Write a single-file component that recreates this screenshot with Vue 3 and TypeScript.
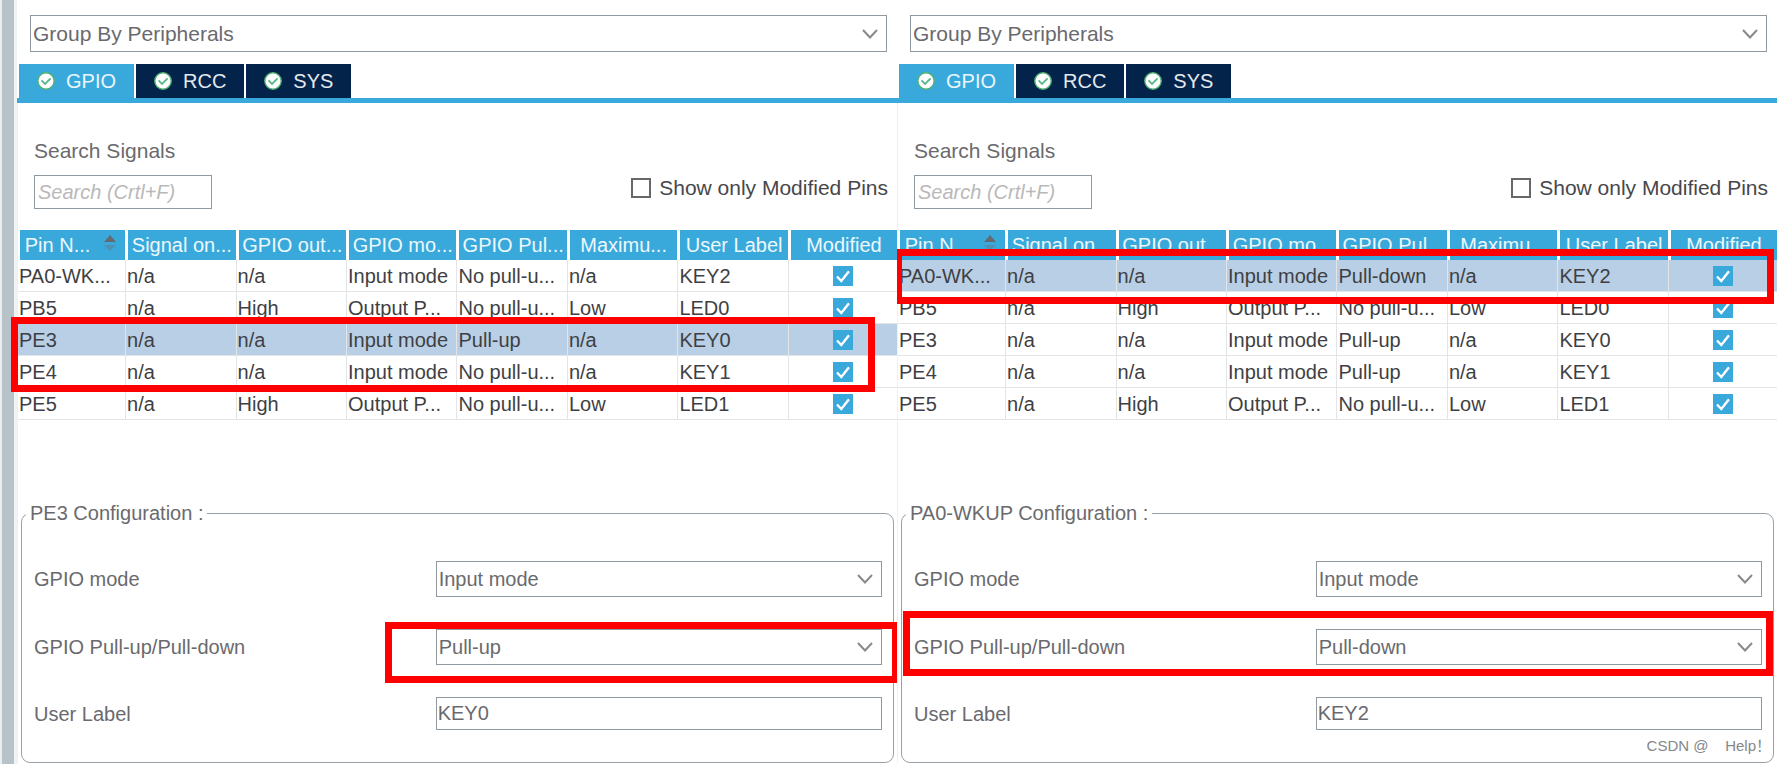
<script setup lang="ts">
import { reactive, ref } from 'vue'

interface PinRow {
  name: string
  signal: string
  output: string
  mode: string
  pull: string
  speed: string
  label: string
  modified: boolean
}

interface Panel {
  id: string
  selected: string
  title: string
  mode: string
  pull: string
  userLabel: string
  search: string
  onlyModified: boolean
  rows: PinRow[]
}

const tabs = ['GPIO', 'RCC', 'SYS']
const activeTab = ref('GPIO')

const headers = ['Pin N...', 'Signal on...', 'GPIO out...', 'GPIO mo...', 'GPIO Pul...', 'Maximu...', 'User Label', 'Modified']

function pin(name: string, output: string, mode: string, pull: string, speed: string, label: string): PinRow {
  return { name, signal: 'n/a', output, mode, pull, speed, label, modified: true }
}

const panels = reactive<Panel[]>([
  {
    id: 'left',
    selected: 'PE3',
    title: 'PE3 Configuration :',
    mode: 'Input mode',
    pull: 'Pull-up',
    userLabel: 'KEY0',
    search: '',
    onlyModified: false,
    rows: [
      pin('PA0-WK...', 'n/a', 'Input mode', 'No pull-u...', 'n/a', 'KEY2'),
      pin('PB5', 'High', 'Output P...', 'No pull-u...', 'Low', 'LED0'),
      pin('PE3', 'n/a', 'Input mode', 'Pull-up', 'n/a', 'KEY0'),
      pin('PE4', 'n/a', 'Input mode', 'No pull-u...', 'n/a', 'KEY1'),
      pin('PE5', 'High', 'Output P...', 'No pull-u...', 'Low', 'LED1'),
    ],
  },
  {
    id: 'right',
    selected: 'PA0-WK...',
    title: 'PA0-WKUP Configuration :',
    mode: 'Input mode',
    pull: 'Pull-down',
    userLabel: 'KEY2',
    search: '',
    onlyModified: false,
    rows: [
      pin('PA0-WK...', 'n/a', 'Input mode', 'Pull-down', 'n/a', 'KEY2'),
      pin('PB5', 'High', 'Output P...', 'No pull-u...', 'Low', 'LED0'),
      pin('PE3', 'n/a', 'Input mode', 'Pull-up', 'n/a', 'KEY0'),
      pin('PE4', 'n/a', 'Input mode', 'Pull-up', 'n/a', 'KEY1'),
      pin('PE5', 'High', 'Output P...', 'No pull-u...', 'Low', 'LED1'),
    ],
  },
])
</script>

<template>
  <main class="page">
    <div class="rail"></div>
    <section v-for="p in panels" :key="p.id" class="panel" :class="p.id">
      <div class="combo group-by">
        <select aria-label="Grouping">
          <option>Group By Peripherals</option>
        </select>
        <svg class="chevron" viewBox="0 0 16 10"><path d="M1 1 8 8.5 15 1" /></svg>
      </div>

      <div class="tabs" role="tablist">
        <button
          v-for="t in tabs"
          :key="t"
          type="button"
          role="tab"
          class="tab"
          :class="{ active: t === activeTab }"
          :aria-selected="t === activeTab"
          @click="activeTab = t"
        >
          <svg class="ok" viewBox="0 0 18 18">
            <circle cx="9" cy="9" r="8.2" />
            <path d="M4.6 8.4 8 12 13.6 6.4" />
          </svg>
          {{ t }}
        </button>
      </div>

      <div class="body">
        <div class="filters">
          <div class="search">
            <label :for="p.id + '-search'">Search Signals</label>
            <input :id="p.id + '-search'" v-model="p.search" type="text" placeholder="Search (Crtl+F)" />
          </div>
          <label class="only">
            <input v-model="p.onlyModified" type="checkbox" />
            Show only Modified Pins
          </label>
        </div>

        <table>
          <thead>
            <tr>
              <th v-for="(h, i) in headers" :key="h" scope="col">
                <span class="head">
                  {{ h }}
                  <svg v-if="i === 0" class="sort" viewBox="0 0 12 17">
                    <path class="up" d="M6 0 12 7H0Z" />
                    <path class="down" d="M0 10H12L6 16Z" />
                  </svg>
                </span>
              </th>
            </tr>
          </thead>
          <tbody>
            <tr v-for="r in p.rows" :key="r.name" :class="{ selected: r.name === p.selected }">
              <td>{{ r.name }}</td>
              <td>{{ r.signal }}</td>
              <td>{{ r.output }}</td>
              <td>{{ r.mode }}</td>
              <td>{{ r.pull }}</td>
              <td>{{ r.speed }}</td>
              <td>{{ r.label }}</td>
              <td>
                <span class="tick">
                  <input v-model="r.modified" type="checkbox" :aria-label="r.label + ' modified'" />
                  <svg v-if="r.modified" viewBox="0 0 20 20"><path d="M4 10.5 8.3 15 16 5.2" /></svg>
                </span>
              </td>
            </tr>
          </tbody>
        </table>

        <fieldset>
          <legend>{{ p.title }}</legend>
          <div class="fields">
            <label :for="p.id + '-mode'">GPIO mode</label>
            <div class="combo">
              <select :id="p.id + '-mode'" v-model="p.mode">
                <option>Input mode</option>
              </select>
              <svg class="chevron" viewBox="0 0 16 10"><path d="M1 1 8 8.5 15 1" /></svg>
            </div>
            <label :for="p.id + '-pull'">GPIO Pull-up/Pull-down</label>
            <div class="combo">
              <select :id="p.id + '-pull'" v-model="p.pull">
                <option>Pull-up</option>
                <option>Pull-down</option>
              </select>
              <svg class="chevron" viewBox="0 0 16 10"><path d="M1 1 8 8.5 15 1" /></svg>
            </div>
            <label :for="p.id + '-label'">User Label</label>
            <input :id="p.id + '-label'" v-model="p.userLabel" class="text" type="text" />
          </div>
        </fieldset>
      </div>

      <div class="mark mark-rows"></div>
      <div class="mark mark-pull"></div>
    </section>
    <div class="credit">CSDN @&nbsp;&nbsp;&nbsp; Help！</div>
  </main>
</template>

<style>
body {
  margin: 0;
  background: #fff;
}
</style>

<style scoped>
* {
  box-sizing: border-box;
}

.page {
  position: relative;
  display: flex;
  min-height: 100vh;
  overflow: hidden;
  background: #fff;
  color: #6a6a6e;
  font: 20px/24px "Liberation Sans", Arial, "Noto Sans CJK SC", sans-serif;
}

.rail {
  flex: none;
  width: 17px;
  background: #b7c3c9;
  border-left: 2px solid #e9eef0;
  border-right: 3px solid #f0f3f4;
}

.panel {
  position: relative;
  flex: 1 1 0;
  min-width: 0;
  padding-top: 15px;
}

input,
select,
button {
  margin: 0;
  font: inherit;
  color: inherit;
  border-radius: 0;
}

.combo {
  display: grid;
  align-items: center;
}

.combo > * {
  grid-area: 1 / 1;
}

.combo select {
  appearance: none;
  width: 100%;
  height: 36px;
  padding: 0 32px 0 2px;
  border: 1px solid #8f999f;
  background: #fff;
}

.chevron {
  justify-self: end;
  width: 16px;
  height: 10px;
  margin-right: 9px;
  fill: none;
  stroke: #87898c;
  stroke-width: 2;
  pointer-events: none;
}

.group-by {
  margin: 0 10px 12px 13px;
  font-size: 21px;
}

.group-by select {
  height: 37px;
}

.tabs {
  display: flex;
  gap: 2px;
  padding-left: 2px;
  border-bottom: 5px solid #39a9dc;
}

.tab {
  display: flex;
  align-items: center;
  gap: 11px;
  height: 34px;
  padding: 0 18px;
  border: 0;
  background: #03234b;
  color: #e4e9ef;
}

.tab.active {
  background: #39a9dc;
  color: #e9f7fd;
}

.ok {
  width: 18px;
  height: 18px;
}

.ok circle {
  fill: #fff;
  stroke: #52b173;
  stroke-width: 1.4;
}

.ok path {
  fill: none;
  stroke: #55b88a;
  stroke-width: 1.8;
}

.body {
  border-left: 1px solid #eef0f1;
}

.filters {
  display: flex;
  justify-content: space-between;
  align-items: flex-end;
  padding: 36px 9px 21px 16px;
  font-size: 21px;
}

.search {
  display: grid;
  gap: 12px;
}

.search input {
  width: 178px;
  height: 34px;
  padding: 0 3px;
  border: 1px solid #8f999f;
  font-size: 20px;
  font-style: italic;
}

.search input::placeholder {
  color: #b9b9b9;
  opacity: 1;
}

.only {
  display: flex;
  align-items: center;
  gap: 8px;
  padding-bottom: 9px;
  color: #47474b;
}

.only input {
  appearance: none;
  width: 20px;
  height: 20px;
  border: 2px solid #66686a;
  background: #fff;
}

table {
  width: 100%;
  table-layout: fixed;
  border-spacing: 0;
  color: #3f3f43;
}

th {
  height: 30px;
  padding: 0;
  border: solid #fff;
  border-width: 0 1px 0 2px;
  background: #39a9dc;
  color: #edf8fd;
  font-weight: 400;
  white-space: nowrap;
}

th:first-child,
th:last-child {
  width: 12.3%;
}

th:last-child {
  border-right: 0;
}

.head {
  display: flex;
  justify-content: center;
  align-items: center;
}

.sort {
  width: 12px;
  height: 17px;
  margin: 0 4px 4px 14px;
}

.up {
  fill: #646a70;
}

.down {
  fill: #4d92b3;
}

td {
  height: 32px;
  padding: 0 0 0 1px;
  border: solid #e1e5e8;
  border-width: 0 1px 1px 0;
  white-space: nowrap;
}

td:last-child {
  border-right: 0;
}

.selected td {
  background: #b8cfe5;
}

.tick {
  display: grid;
  width: 20px;
  height: 20px;
  margin: 0 auto;
}

.tick > * {
  grid-area: 1 / 1;
}

.tick input {
  appearance: none;
  width: 20px;
  height: 20px;
  border: 1px solid #39a9dc;
}

.tick input:checked {
  background: #39a9dc;
}

.tick svg {
  fill: none;
  stroke: #fff;
  stroke-width: 2.4;
  pointer-events: none;
}

fieldset {
  min-width: 0;
  margin: 81px 3px 0;
  padding: 36px 11px 32px 12px;
  border: 1px solid #98a1a7;
  border-radius: 9px;
}

legend {
  margin-left: -8px;
  padding: 0 4px;
}

.fields {
  display: grid;
  grid-template-columns: 9fr 10fr;
  row-gap: 32px;
  align-items: center;
}

.text {
  width: 100%;
  height: 33px;
  padding: 0 1px;
  border: 1px solid #8f999f;
  background: #fff;
}

/* Red highlight frames lie over the controls they point at. */
.mark {
  position: absolute;
  border: 7px solid #f00;
  pointer-events: none;
}

.left .mark-rows {
  top: 317px;
  left: -6px;
  right: 22px;
  height: 75px;
}

.left .mark-pull {
  top: 622px;
  left: 368px;
  right: 0;
  height: 61px;
  border-right-width: 5px;
}

.left {
  z-index: 1;
}

.right .mark-rows {
  top: 249px;
  left: 0;
  right: 3px;
  height: 55px;
  border-left-width: 5px;
}

.right .mark-pull {
  top: 611px;
  left: 6px;
  right: 4px;
  height: 65px;
}

.credit {
  position: absolute;
  right: 6px;
  bottom: 6px;
  z-index: 2;
  color: #85878a;
  font-size: 15px;
}
</style>
